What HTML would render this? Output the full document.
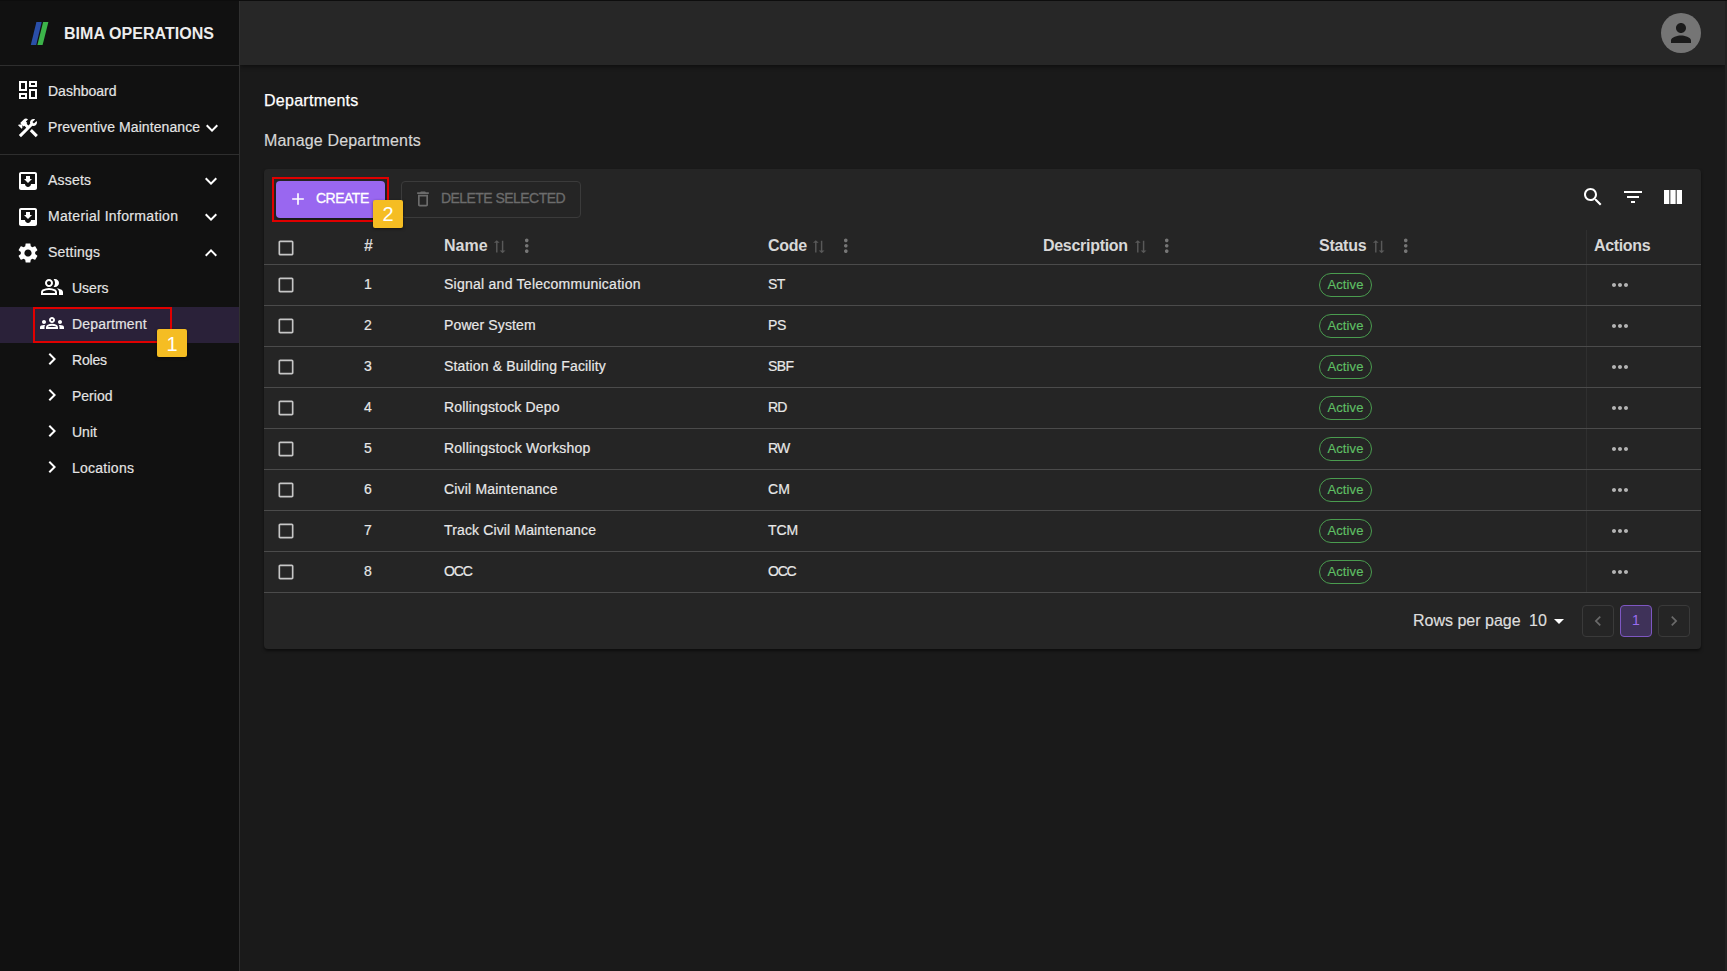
<!DOCTYPE html>
<html lang="en">
<head>
<meta charset="utf-8">
<title>Departments - BIMA OPERATIONS</title>
<style>
*{box-sizing:border-box;margin:0;padding:0}
html,body{width:1727px;height:971px;overflow:hidden;background:#1a1a1a;font-family:"Liberation Sans",sans-serif;color:#fff}
body{position:relative}
svg{display:block}
.abs{position:absolute}
/* top dark line + right strip */
#topline{left:0;top:0;width:1727px;height:1px;background:#0d0d0d;z-index:50}
#rstrip{left:1725px;top:1px;width:2px;height:970px;background:#212121;z-index:50}
/* sidebar */
#sidebar{left:0;top:0;width:240px;height:971px;background:#111111;border-right:1px solid #303030;z-index:10}
#logo{left:0;top:0;width:239px;height:66px;border-bottom:1px solid #2e2e2e}
#logo .txt{left:64px;top:24px;font-weight:bold;font-size:16px;line-height:20px;color:#ededed;white-space:nowrap;letter-spacing:0.05px}
.nav{left:0;width:239px;height:36px}
.nav .ic{position:absolute;left:16px;top:7px;width:24px;height:24px;fill:#fff}
.nav .lb{position:absolute;left:48px;top:9px;font-size:14px;line-height:18px;color:#e4e4e4;white-space:nowrap;-webkit-text-stroke:.18px #e4e4e4}
.nav .ch{position:absolute;left:199px;top:7px;width:24px;height:24px;fill:#fff}
.nav.sub .ic{left:40px;top:5px}
.nav.sub .lb{left:72px}
.selbg{left:0;top:307px;width:239px;height:36px;background:#2a2139}
.divider{left:0;width:239px;height:1px;background:#2e2e2e}
/* header */
#header{left:240px;top:1px;width:1485px;height:64px;background:#272727;box-shadow:0 2px 4px rgba(0,0,0,.42);z-index:5}
#avatar{left:1661px;top:13px;width:40px;height:40px;border-radius:50%;background:#757575;z-index:6}
/* titles */
#t1{left:264px;top:91px;font-size:16px;line-height:20px;color:#fff;white-space:nowrap;letter-spacing:.27px;-webkit-text-stroke:.25px #fff}
#t2{left:264px;top:131px;font-size:16px;line-height:20px;color:#d6d6d6;white-space:nowrap;letter-spacing:.17px;-webkit-text-stroke:.18px #d6d6d6}
/* card */
#card{left:264px;top:169px;width:1437px;height:480px;background:#252525;border-radius:4px;box-shadow:0 2px 3px rgba(0,0,0,.5)}
.hl{border:2px solid #e00000;z-index:20}
.badge{background:#f5bd23;color:#fff;font-size:20px;line-height:28px;text-align:center;z-index:21;box-shadow:0 1px 3px rgba(0,0,0,.5);border-radius:2px}
#btnCreate{left:12px;top:12px;width:109px;height:37px;background:#9967f0;border-radius:4px;box-shadow:0 2px 3px rgba(0,0,0,.4)}
#btnCreate span{position:absolute;left:40px;top:8px;font-size:14px;line-height:18px;color:#fff;white-space:nowrap;letter-spacing:-.5px;-webkit-text-stroke:.3px #fff}
#btnDelete{left:137px;top:12px;width:180px;height:37px;border:1px solid #3b3b3b;border-radius:4px}
#btnDelete span{position:absolute;left:39px;top:7px;font-size:14px;line-height:18px;color:#6c6c6c;white-space:nowrap;letter-spacing:-.55px;-webkit-text-stroke:.3px #6c6c6c}
/* table */
.hrow{left:0;top:59px;width:1437px;height:37px;border-bottom:1px solid #4b4b4b}
.th{position:absolute;top:8px;font-size:16px;line-height:20px;font-weight:bold;color:#d8d8d8;white-space:nowrap}
.row{left:0;width:1437px;height:41px;border-bottom:1px solid #4b4b4b}
.td{position:absolute;top:10px;font-size:14px;line-height:18px;color:#e8e8e8;white-space:nowrap;-webkit-text-stroke:.18px #e8e8e8}
.cb{position:absolute;left:12px;width:20px;height:20px;fill:#c6c6c6}
.chip{position:absolute;left:1055px;top:8px;width:53px;height:24px;border:1px solid #4a9c4f;border-radius:12px;color:#5fbf64;font-size:13px;line-height:22px;text-align:center;letter-spacing:.12px;-webkit-text-stroke:.15px #5fbf64}
.dots{position:absolute;left:1344px;top:8px;width:24px;height:24px;fill:#b4b4b4}
#vline{left:1322px;top:61px;width:1px;height:362px;background:#2f2f2f}
.sort{position:absolute;width:17.4px;height:17.4px;fill:#595959}
.more{position:absolute;width:21.5px;height:21.5px;fill:#767676}
/* pagination */
#rpp{left:1149px;top:442px;font-size:16px;line-height:20px;color:#dedede;white-space:nowrap;-webkit-text-stroke:.18px #dedede}
#rppn{left:1265px;top:442px;font-size:16px;line-height:20px;color:#dedede;white-space:nowrap;-webkit-text-stroke:.18px #dedede}
.pb{top:436px;width:32px;height:32px;border:1px solid #3a3a3a;border-radius:4px}
.pb svg{position:absolute;left:5px;top:5px;width:20px;height:20px;fill:#6a6a6a}
#pcur{background:#3f3259;border-color:#7e57c2;color:#9a6cf0;font-size:14px;line-height:29px;text-align:center}
</style>
</head>
<body>
<div class="abs" id="topline"></div>
<div class="abs" id="rstrip"></div>

<div class="abs" id="sidebar">
  <div class="abs" id="logo">
    <svg class="abs" style="left:29px;top:20px" width="22" height="26" viewBox="0 0 22 26"><polygon points="7.4,2 12.7,2 7.2,25 1.8,25" fill="#2a4fa8"/><polygon points="14.1,2 19.4,2 13.6,25 8.4,25" fill="#3cb44a"/></svg>
    <div class="abs txt">BIMA OPERATIONS</div>
  </div>

  <div class="abs nav" style="top:73px">
    <svg class="ic" style="top:5px" viewBox="0 0 24 24"><path d="M19 5v2h-4V5h4M9 5v6H5V5h4m10 8v6h-4v-6h4M9 17v2H5v-2h4M21 3h-8v6h8V3zM11 3H3v10h8V3zm10 8h-8v10h8V11zm-10 4H3v6h8v-6z"/></svg>
    <div class="lb">Dashboard</div>
  </div>
  <div class="abs nav" style="top:109px">
    <svg class="ic" viewBox="0 0 24 24"><path d="m13.783 15.172 2.121-2.121 5.996 5.996-2.121 2.121zM17.5 10c1.93 0 3.5-1.57 3.5-3.5 0-.58-.16-1.12-.41-1.6l-2.7 2.7-1.49-1.49 2.7-2.7c-.48-.25-1.02-.41-1.6-.41C15.57 3 14 4.57 14 6.5c0 .41.08.8.21 1.16l-1.85 1.85-1.78-1.78.71-.71-1.41-1.41L12 3.49c-1.17-1.17-3.07-1.17-4.24 0L4.22 7.03l1.41 1.41H2.81l-.71.71 3.54 3.54.71-.71V9.150l1.41 1.41.71-.71 1.78 1.78-7.41 7.41 2.12 2.12L16.34 9.79c.36.13.75.21 1.16.21z"/></svg>
    <div class="lb" style="letter-spacing:.09px">Preventive Maintenance</div>
    <svg class="ch" style="left:200px" viewBox="0 0 24 24"><path d="M16.59 8.59 12 13.17 7.41 8.59 6 10l6 6 6-6z"/></svg>
  </div>
  <div class="abs divider" style="top:154px"></div>
  <div class="abs nav" style="top:162px">
    <svg class="ic" viewBox="0 0 24 24"><path d="M19 3H4.99c-1.11 0-1.98.9-1.98 2L3 19c0 1.1.88 2 1.99 2H19c1.1 0 2-.9 2-2V5c0-1.1-.9-2-2-2zm0 12h-4c0 1.66-1.35 3-3 3s-3-1.34-3-3H4.99V5H19v10zm-3-5h-2V7h-4v3H8l4 4 4-4z"/></svg>
    <div class="lb" style="letter-spacing:.2px">Assets</div>
    <svg class="ch" viewBox="0 0 24 24"><path d="M16.59 8.59 12 13.17 7.41 8.59 6 10l6 6 6-6z"/></svg>
  </div>
  <div class="abs nav" style="top:198px">
    <svg class="ic" viewBox="0 0 24 24"><path d="M19 3H4.99c-1.11 0-1.98.9-1.98 2L3 19c0 1.1.88 2 1.99 2H19c1.1 0 2-.9 2-2V5c0-1.1-.9-2-2-2zm0 12h-4c0 1.66-1.35 3-3 3s-3-1.34-3-3H4.99V5H19v10zm-3-5h-2V7h-4v3H8l4 4 4-4z"/></svg>
    <div class="lb" style="letter-spacing:.33px">Material Information</div>
    <svg class="ch" viewBox="0 0 24 24"><path d="M16.59 8.59 12 13.17 7.41 8.59 6 10l6 6 6-6z"/></svg>
  </div>
  <div class="abs nav" style="top:234px">
    <svg class="ic" viewBox="0 0 24 24"><path d="M19.14 12.94c.04-.3.06-.61.06-.94 0-.32-.02-.64-.07-.94l2.03-1.58c.18-.14.23-.41.12-.61l-1.92-3.32c-.12-.22-.37-.29-.59-.22l-2.39.96c-.5-.38-1.03-.7-1.62-.94l-.36-2.54c-.04-.24-.24-.41-.48-.41h-3.84c-.24 0-.43.17-.47.41l-.36 2.54c-.59.24-1.13.57-1.62.94l-2.39-.96c-.22-.08-.47 0-.59.22L2.740 8.87c-.12.21-.08.47.12.61l2.03 1.58c-.05.3-.09.63-.09.94s.02.64.07.94l-2.03 1.58c-.18.14-.23.41-.12.61l1.92 3.32c.12.22.37.29.59.22l2.39-.96c.5.38 1.03.7 1.62.94l.36 2.54c.05.24.24.41.48.41h3.84c.24 0 .44-.17.47-.41l.36-2.54c.59-.24 1.13-.56 1.62-.94l2.39.96c.22.08.47 0 .59-.22l1.92-3.32c.12-.22.07-.47-.12-.61l-2.01-1.58zM12 15.6c-1.98 0-3.6-1.62-3.6-3.6s1.62-3.6 3.6-3.6 3.6 1.62 3.6 3.6-1.62 3.6-3.6 3.6z"/></svg>
    <div class="lb" style="letter-spacing:.2px">Settings</div>
    <svg class="ch" viewBox="0 0 24 24"><path d="m12 8-6 6 1.410 1.410L12 10.830l4.590 4.580L18 14z"/></svg>
  </div>
  <div class="abs nav sub" style="top:270px">
    <svg class="ic" viewBox="0 -960 960 960"><path d="M40-160v-112q0-34 17.5-62.500T104-378q62-31 126-46.500T360-440q66 0 130 15.500T616-378q29 15 46.500 43.500T680-272v112H40Zm720 0v-120q0-44-24.500-84.500T666-434q51 6 96 20.500t84 35.500q36 20 55 44.500t19 53.500v120H760ZM360-480q-66 0-113-47t-47-113q0-66 47-113t113-47q66 0 113 47t47 113q0 66-47 113t-113 47Zm400-160q0 66-47 113t-113 47q-11 0-28-2.500t-28-5.500q27-32 41.500-71t14.500-81q0-42-14.500-81T544-792q14-5 28-6.500t28-1.500q66 0 113 47t47 113ZM120-240h480v-32q0-11-5.500-20T580-306q-54-27-109-40.500T360-360q-56 0-111 13.500T140-306q-9 5-14.500 14t-5.500 20v32Zm240-320q33 0 56.500-23.500T440-640q0-33-23.500-56.500T360-720q-33 0-56.500 23.500T280-640q0 33 23.500 56.500T360-560Zm0 320Zm0-400Z"/></svg>
    <div class="lb">Users</div>
  </div>
  <div class="abs selbg"></div>
  <div class="abs nav sub" style="top:306px">
    <svg class="ic" viewBox="0 0 24 24"><path d="M4 13c1.1 0 2-.9 2-2s-.9-2-2-2-2 .9-2 2 .9 2 2 2zm1.130 1.100c-.37-.06-.74-.1-1.130-.1-.99 0-1.930.21-2.780.58C.48 14.900 0 15.620 0 16.430V18h4.500v-1.610c0-.83.23-1.610.63-2.290zM20 13c1.1 0 2-.9 2-2s-.9-2-2-2-2 .9-2 2 .9 2 2 2zm4 3.430c0-.81-.48-1.530-1.220-1.850-.85-.37-1.790-.58-2.780-.58-.39 0-.76.04-1.130.1.4.68.63 1.460.63 2.290V18H24v-1.570zm-7.760-2.780c-1.170-.52-2.610-.9-4.240-.9-1.630 0-3.070.39-4.240.9C6.680 14.130 6 15.210 6 16.390V18h12v-1.610c0-1.180-.68-2.260-1.760-2.740zM8.070 16c.09-.23.13-.39.91-.69.97-.38 1.990-.56 3.020-.56s2.050.18 3.020.56c.77.3.81.46.91.69H8.070zM12 8c.55 0 1 .45 1 1s-.45 1-1 1-1-.45-1-1 .45-1 1-1m0-2c-1.660 0-3 1.340-3 3s1.340 3 3 3 3-1.340 3-3-1.340-3-3-3z"/></svg>
    <div class="lb" style="letter-spacing:.17px">Department</div>
  </div>
  <div class="abs nav sub" style="top:342px">
    <svg class="ic" viewBox="0 0 24 24"><path d="M10 6 8.59 7.41 13.17 12l-4.58 4.59L10 18l6-6z"/></svg>
    <div class="lb" style="letter-spacing:-.2px">Roles</div>
  </div>
  <div class="abs nav sub" style="top:378px">
    <svg class="ic" viewBox="0 0 24 24"><path d="M10 6 8.59 7.41 13.17 12l-4.58 4.59L10 18l6-6z"/></svg>
    <div class="lb">Period</div>
  </div>
  <div class="abs nav sub" style="top:414px">
    <svg class="ic" viewBox="0 0 24 24"><path d="M10 6 8.59 7.41 13.17 12l-4.58 4.59L10 18l6-6z"/></svg>
    <div class="lb">Unit</div>
  </div>
  <div class="abs nav sub" style="top:450px">
    <svg class="ic" viewBox="0 0 24 24"><path d="M10 6 8.59 7.41 13.17 12l-4.58 4.59L10 18l6-6z"/></svg>
    <div class="lb" style="letter-spacing:.25px">Locations</div>
  </div>

  <div class="abs hl" style="left:33px;top:307px;width:139px;height:36px"></div>
  <div class="abs badge" style="left:157px;top:329px;width:30px;height:28px;line-height:30px">1</div>
</div>


<div class="abs" id="header"></div>
<div class="abs" id="avatar"><svg class="abs" style="left:5px;top:5px" width="30" height="30" viewBox="0 0 24 24" fill="#1b1b1b"><path d="M12 12c2.21 0 4-1.79 4-4s-1.79-4-4-4-4 1.79-4 4 1.79 4 4 4zm0 2c-2.67 0-8 1.34-8 4v2h16v-2c0-2.66-5.33-4-8-4z"/></svg></div>


<div class="abs" id="t1">Departments</div>
<div class="abs" id="t2">Manage Departments</div>
<div class="abs" id="card">
  <div class="abs hl" style="left:8px;top:8px;width:117px;height:45px"></div>
  <div class="abs" id="btnCreate"><svg class="abs" style="left:12px;top:8px" width="20" height="20" viewBox="0 0 24 24" fill="#fff"><path d="M19 13h-6v6h-2v-6H5v-2h6V5h2v6h6v2z"/></svg><span>CREATE</span></div>
  <div class="abs badge" style="left:109px;top:31px;width:30px;height:28px">2</div>
  <div class="abs" id="btnDelete"><svg class="abs" style="left:11px;top:7px" width="20" height="20" viewBox="0 0 24 24" fill="#6c6c6c"><path d="M6 19c0 1.1.9 2 2 2h8c1.1 0 2-.9 2-2V7H6v12zM8 9h8v10H8V9zm7.5-5-1-1h-5l-1 1H5v2h14V4z"/></svg><span>DELETE SELECTED</span></div>
  <svg class="abs" style="left:1317px;top:16px" width="24" height="24" viewBox="0 0 24 24" fill="#fff"><path d="M15.5 14h-.79l-.28-.27C15.41 12.59 16 11.11 16 9.5 16 5.91 13.09 3 9.5 3S3 5.91 3 9.5 5.91 16 9.5 16c1.61 0 3.09-.59 4.23-1.57l.27.28v.79l5 4.99L20.49 19l-4.99-5zm-6 0C7.01 14 5 11.99 5 9.5S7.01 5 9.500 5 14 7.01 14 9.5 11.99 14 9.5 14z"/></svg>
  <svg class="abs" style="left:1357px;top:16px" width="24" height="24" viewBox="0 0 24 24" fill="#fff"><path d="M10 18h4v-2h-4v2zM3 6v2h18V6H3zm3 7h12v-2H6v2z"/></svg>
  <svg class="abs" style="left:1397px;top:16px" width="24" height="24" viewBox="0 0 24 24" fill="#fff"><path d="M14.67 5v14H9.33V5h5.34zm1 14H21V5h-5.33v14zm-7.34 0V5H3v14h5.33z"/></svg>
  <div class="abs" id="vline"></div>
  <div class="abs hrow">
    <svg class="cb" style="top:10px" viewBox="0 0 24 24"><path d="M19 5v14H5V5h14m0-2H5c-1.1 0-2 .9-2 2v14c0 1.1.9 2 2 2h14c1.1 0 2-.9 2-2V5c0-1.1-.9-2-2-2z"/></svg>
    <div class="th" style="left:100px">#</div>
    <div class="th" style="left:180px">Name</div><svg class="sort" style="left:227.2px;top:10.3px" viewBox="0 0 24 24"><path d="m18 12 4-4-4-4v3H3v2h15zM6 12l-4 4 4 4v-3h15v-2H6z" transform="translate(12 12) rotate(-90) scale(.9 1) translate(-12 -12)"/></svg><svg class="more" style="left:252.25px;top:7.35px" viewBox="0 0 24 24"><path d="M12 8c1.1 0 2-.9 2-2s-.9-2-2-2-2 .9-2 2 .9 2 2 2zm0 2c-1.1 0-2 .9-2 2s.9 2 2 2 2-.9 2-2-.9-2-2-2zm0 6c-1.1 0-2 .9-2 2s.9 2 2 2 2-.9 2-2-.9-2-2-2z"/></svg>
    <div class="th" style="left:504px;letter-spacing:-.3px">Code</div><svg class="sort" style="left:546.2px;top:10.3px" viewBox="0 0 24 24"><path d="m18 12 4-4-4-4v3H3v2h15zM6 12l-4 4 4 4v-3h15v-2H6z" transform="translate(12 12) rotate(-90) scale(.9 1) translate(-12 -12)"/></svg><svg class="more" style="left:571.25px;top:7.35px" viewBox="0 0 24 24"><path d="M12 8c1.1 0 2-.9 2-2s-.9-2-2-2-2 .9-2 2 .9 2 2 2zm0 2c-1.1 0-2 .9-2 2s.9 2 2 2 2-.9 2-2-.9-2-2-2zm0 6c-1.1 0-2 .9-2 2s.9 2 2 2 2-.9 2-2-.9-2-2-2z"/></svg>
    <div class="th" style="left:779px;letter-spacing:-.29px">Description</div><svg class="sort" style="left:867.5px;top:10.3px" viewBox="0 0 24 24"><path d="m18 12 4-4-4-4v3H3v2h15zM6 12l-4 4 4 4v-3h15v-2H6z" transform="translate(12 12) rotate(-90) scale(.9 1) translate(-12 -12)"/></svg><svg class="more" style="left:892.25px;top:7.35px" viewBox="0 0 24 24"><path d="M12 8c1.1 0 2-.9 2-2s-.9-2-2-2-2 .9-2 2 .9 2 2 2zm0 2c-1.1 0-2 .9-2 2s.9 2 2 2 2-.9 2-2-.9-2-2-2zm0 6c-1.1 0-2 .9-2 2s.9 2 2 2 2-.9 2-2-.9-2-2-2z"/></svg>
    <div class="th" style="left:1055px;letter-spacing:-.27px">Status</div><svg class="sort" style="left:1106px;top:10.3px" viewBox="0 0 24 24"><path d="m18 12 4-4-4-4v3H3v2h15zM6 12l-4 4 4 4v-3h15v-2H6z" transform="translate(12 12) rotate(-90) scale(.9 1) translate(-12 -12)"/></svg><svg class="more" style="left:1131.25px;top:7.35px" viewBox="0 0 24 24"><path d="M12 8c1.1 0 2-.9 2-2s-.9-2-2-2-2 .9-2 2 .9 2 2 2zm0 2c-1.1 0-2 .9-2 2s.9 2 2 2 2-.9 2-2-.9-2-2-2zm0 6c-1.1 0-2 .9-2 2s.9 2 2 2 2-.9 2-2-.9-2-2-2z"/></svg>
    <div class="th" style="left:1330px;letter-spacing:-.34px">Actions</div>
  </div>
  <div class="abs row" style="top:96px"><svg class="cb" style="top:10px" viewBox="0 0 24 24"><path d="M19 5v14H5V5h14m0-2H5c-1.1 0-2 .9-2 2v14c0 1.1.9 2 2 2h14c1.1 0 2-.9 2-2V5c0-1.1-.9-2-2-2z"/></svg><div class="td" style="left:100px">1</div><div class="td" style="left:180px;letter-spacing:0.254px">Signal and Telecommunication</div><div class="td" style="left:504px;letter-spacing:-0.6px">ST</div><div class="chip">Active</div><svg class="dots" viewBox="0 0 24 24"><path d="M6 10c-1.1 0-2 .9-2 2s.9 2 2 2 2-.9 2-2-.9-2-2-2zm12 0c-1.1 0-2 .9-2 2s.9 2 2 2 2-.9 2-2-.9-2-2-2zm-6 0c-1.1 0-2 .9-2 2s.9 2 2 2 2-.9 2-2-.9-2-2-2z"/></svg></div>
  <div class="abs row" style="top:137px"><svg class="cb" style="top:10px" viewBox="0 0 24 24"><path d="M19 5v14H5V5h14m0-2H5c-1.1 0-2 .9-2 2v14c0 1.1.9 2 2 2h14c1.1 0 2-.9 2-2V5c0-1.1-.9-2-2-2z"/></svg><div class="td" style="left:100px">2</div><div class="td" style="left:180px;letter-spacing:0.13px">Power System</div><div class="td" style="left:504px;letter-spacing:-0.3px">PS</div><div class="chip">Active</div><svg class="dots" viewBox="0 0 24 24"><path d="M6 10c-1.1 0-2 .9-2 2s.9 2 2 2 2-.9 2-2-.9-2-2-2zm12 0c-1.1 0-2 .9-2 2s.9 2 2 2 2-.9 2-2-.9-2-2-2zm-6 0c-1.1 0-2 .9-2 2s.9 2 2 2 2-.9 2-2-.9-2-2-2z"/></svg></div>
  <div class="abs row" style="top:178px"><svg class="cb" style="top:10px" viewBox="0 0 24 24"><path d="M19 5v14H5V5h14m0-2H5c-1.1 0-2 .9-2 2v14c0 1.1.9 2 2 2h14c1.1 0 2-.9 2-2V5c0-1.1-.9-2-2-2z"/></svg><div class="td" style="left:100px">3</div><div class="td" style="left:180px;letter-spacing:0.15px">Station &amp; Building Facility</div><div class="td" style="left:504px;letter-spacing:-0.55px">SBF</div><div class="chip">Active</div><svg class="dots" viewBox="0 0 24 24"><path d="M6 10c-1.1 0-2 .9-2 2s.9 2 2 2 2-.9 2-2-.9-2-2-2zm12 0c-1.1 0-2 .9-2 2s.9 2 2 2 2-.9 2-2-.9-2-2-2zm-6 0c-1.1 0-2 .9-2 2s.9 2 2 2 2-.9 2-2-.9-2-2-2z"/></svg></div>
  <div class="abs row" style="top:219px"><svg class="cb" style="top:10px" viewBox="0 0 24 24"><path d="M19 5v14H5V5h14m0-2H5c-1.1 0-2 .9-2 2v14c0 1.1.9 2 2 2h14c1.1 0 2-.9 2-2V5c0-1.1-.9-2-2-2z"/></svg><div class="td" style="left:100px">4</div><div class="td" style="left:180px;letter-spacing:0.165px">Rollingstock Depo</div><div class="td" style="left:504px;letter-spacing:-0.8px">RD</div><div class="chip">Active</div><svg class="dots" viewBox="0 0 24 24"><path d="M6 10c-1.1 0-2 .9-2 2s.9 2 2 2 2-.9 2-2-.9-2-2-2zm12 0c-1.1 0-2 .9-2 2s.9 2 2 2 2-.9 2-2-.9-2-2-2zm-6 0c-1.1 0-2 .9-2 2s.9 2 2 2 2-.9 2-2-.9-2-2-2z"/></svg></div>
  <div class="abs row" style="top:260px"><svg class="cb" style="top:10px" viewBox="0 0 24 24"><path d="M19 5v14H5V5h14m0-2H5c-1.1 0-2 .9-2 2v14c0 1.1.9 2 2 2h14c1.1 0 2-.9 2-2V5c0-1.1-.9-2-2-2z"/></svg><div class="td" style="left:100px">5</div><div class="td" style="left:180px;letter-spacing:0.21px">Rollingstock Workshop</div><div class="td" style="left:504px;letter-spacing:-0.95px">RW</div><div class="chip">Active</div><svg class="dots" viewBox="0 0 24 24"><path d="M6 10c-1.1 0-2 .9-2 2s.9 2 2 2 2-.9 2-2-.9-2-2-2zm12 0c-1.1 0-2 .9-2 2s.9 2 2 2 2-.9 2-2-.9-2-2-2zm-6 0c-1.1 0-2 .9-2 2s.9 2 2 2 2-.9 2-2-.9-2-2-2z"/></svg></div>
  <div class="abs row" style="top:301px"><svg class="cb" style="top:10px" viewBox="0 0 24 24"><path d="M19 5v14H5V5h14m0-2H5c-1.1 0-2 .9-2 2v14c0 1.1.9 2 2 2h14c1.1 0 2-.9 2-2V5c0-1.1-.9-2-2-2z"/></svg><div class="td" style="left:100px">6</div><div class="td" style="left:180px;letter-spacing:0.19px">Civil Maintenance</div><div class="td" style="left:504px;letter-spacing:0.1px">CM</div><div class="chip">Active</div><svg class="dots" viewBox="0 0 24 24"><path d="M6 10c-1.1 0-2 .9-2 2s.9 2 2 2 2-.9 2-2-.9-2-2-2zm12 0c-1.1 0-2 .9-2 2s.9 2 2 2 2-.9 2-2-.9-2-2-2zm-6 0c-1.1 0-2 .9-2 2s.9 2 2 2 2-.9 2-2-.9-2-2-2z"/></svg></div>
  <div class="abs row" style="top:342px"><svg class="cb" style="top:10px" viewBox="0 0 24 24"><path d="M19 5v14H5V5h14m0-2H5c-1.1 0-2 .9-2 2v14c0 1.1.9 2 2 2h14c1.1 0 2-.9 2-2V5c0-1.1-.9-2-2-2z"/></svg><div class="td" style="left:100px">7</div><div class="td" style="left:180px;letter-spacing:0.14px">Track Civil Maintenance</div><div class="td" style="left:504px;letter-spacing:-0.1px">TCM</div><div class="chip">Active</div><svg class="dots" viewBox="0 0 24 24"><path d="M6 10c-1.1 0-2 .9-2 2s.9 2 2 2 2-.9 2-2-.9-2-2-2zm12 0c-1.1 0-2 .9-2 2s.9 2 2 2 2-.9 2-2-.9-2-2-2zm-6 0c-1.1 0-2 .9-2 2s.9 2 2 2 2-.9 2-2-.9-2-2-2z"/></svg></div>
  <div class="abs row" style="top:383px"><svg class="cb" style="top:10px" viewBox="0 0 24 24"><path d="M19 5v14H5V5h14m0-2H5c-1.1 0-2 .9-2 2v14c0 1.1.9 2 2 2h14c1.1 0 2-.9 2-2V5c0-1.1-.9-2-2-2z"/></svg><div class="td" style="left:100px">8</div><div class="td" style="left:180px;letter-spacing:-1.15px">OCC</div><div class="td" style="left:504px;letter-spacing:-1.25px">OCC</div><div class="chip">Active</div><svg class="dots" viewBox="0 0 24 24"><path d="M6 10c-1.1 0-2 .9-2 2s.9 2 2 2 2-.9 2-2-.9-2-2-2zm12 0c-1.1 0-2 .9-2 2s.9 2 2 2 2-.9 2-2-.9-2-2-2zm-6 0c-1.1 0-2 .9-2 2s.9 2 2 2 2-.9 2-2-.9-2-2-2z"/></svg></div>
  <div class="abs" id="rpp">Rows per page</div>
  <div class="abs" id="rppn">10</div>
  <svg class="abs" style="left:1283px;top:440px" width="24" height="24" viewBox="0 0 24 24" fill="#fff"><path d="M7 10l5 5 5-5z"/></svg>
  <div class="abs pb" style="left:1318px"><svg viewBox="0 0 24 24"><path d="M15.41 7.41 14 6l-6 6 6 6 1.41-1.41L10.83 12z"/></svg></div>
  <div class="abs pb" id="pcur" style="left:1356px">1</div>
  <div class="abs pb" style="left:1394px"><svg viewBox="0 0 24 24"><path d="M10 6 8.59 7.41 13.17 12l-4.58 4.59L10 18l6-6z"/></svg></div>
</div>


</body>
</html>
